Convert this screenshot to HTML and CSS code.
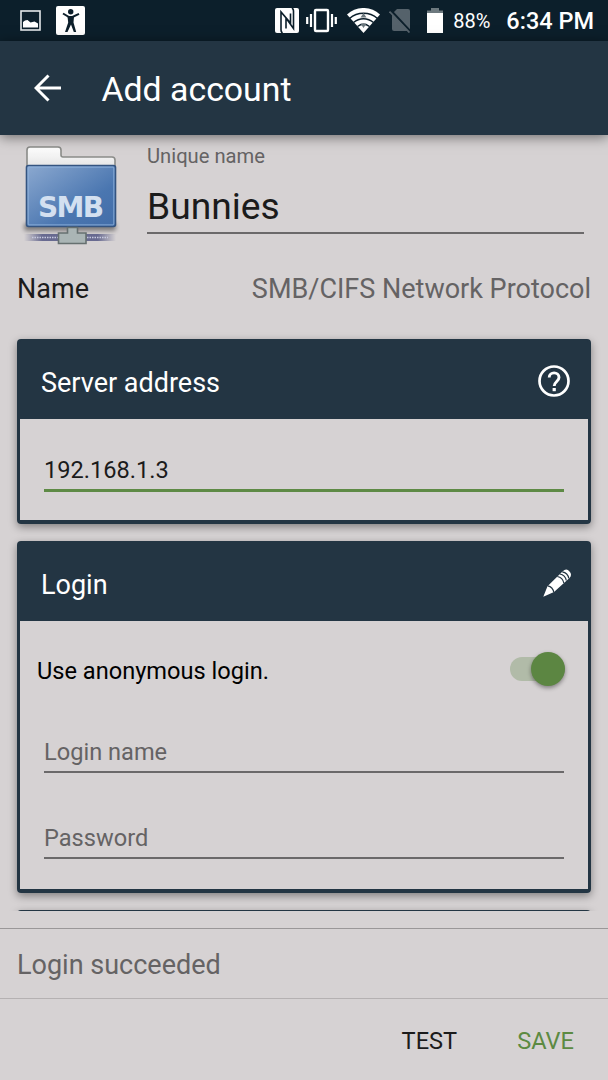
FILE: index.html
```
<!DOCTYPE html>
<html lang="en">
<head>
  <meta charset="UTF-8" />
  <meta name="viewport" content="width=device-width, initial-scale=1" />
  <title>Add account</title>
  <link rel="stylesheet" href="styles.css">
</head>
<body>
  <!-- Status bar -->
  <div class="statusbar">
    <svg class="ic-picture" width="22" height="22" viewBox="0 0 22 22">
      <rect x="1" y="1" width="19" height="19" fill="none" stroke="#e4e8ea" stroke-width="1.6"/>
      <path d="M3 17.5V12l2-1.5 2.5-.5 3 2.5 4-1 3.500 2v4z" fill="#fff"/>
    </svg>
    <svg class="ic-person" width="29" height="29" viewBox="0 0 29 29">
      <rect width="29" height="29" rx="2" fill="#fff"/>
      <circle cx="14.7" cy="5.7" r="2.7" fill="#0c1f2b"/>
      <path d="M7 7.5l6 3.500h3.500l6.500-3.200M14.700 11v6" fill="none" stroke="#0c1f2b" stroke-width="2"/>
      <path d="M11.500 10.500h6.500l-.5 6 2.700 9.500h-2.400L15 18.500 11.500 26H9l3.200-9.500z" fill="#0c1f2b"/>
    </svg>

    <div class="status-right">
      <svg class="ic-nfc" width="24" height="25" viewBox="0 0 24 25">
        <rect width="24" height="25" rx="2" fill="#fff"/>
        <path d="M7.500 25q-1.500-1-1.500-3V4l9.500 11V5.500M11 20.500V10l7.500 10.500V3q0-2-1.500-3" fill="none" stroke="#0c1f2b" stroke-width="1.6"/>
      </svg>
      <svg class="ic-vibrate" width="31" height="25" viewBox="0 0 31 25">
        <rect x="9" y="2" width="13" height="21" rx="1" fill="none" stroke="#fff" stroke-width="2.4"/>
        <path d="M5 6v13M1.200 9v7M26 6v13M29.800 9v7" stroke="#fff" stroke-width="2.2"/>
      </svg>
      <svg class="ic-wifi" width="33" height="25" viewBox="0 0 33 25">
        <path d="M0 6.500C9.500-2.200 23.500-2.200 33 6.500L16.500 25z" fill="#fff"/>
        <path d="M2.500 10.500c8-7 20-7 28 0M6.500 14.500c6-5 14-5 20 0M10.500 18.500c4-3 8-3 12 0" fill="none" stroke="#0c1f2b" stroke-width="1.5"/>
        <path d="M16.500 5l3 4.500h-6zM16.500 20l-3-4.500h6z" fill="#6d797f"/>
      </svg>
      <svg class="ic-nosim" width="23" height="25" viewBox="0 0 23 25">
        <path d="M8 1h11q2 0 2 2v19q0 1-2 1H5q-2 0-2-2V6z" fill="#55626b"/>
        <path d="M1 1.500l20.500 22" stroke="#0c1f2b" stroke-width="2.4"/>
        <path d="M.5 3.500l20 21" stroke="#55626b" stroke-width="1.8"/>
      </svg>
      <svg class="ic-battery" width="16" height="25" viewBox="0 0 16 25">
        <path d="M0 2.500h4V0h8v2.500h4V6H0z" fill="#6d797f"/>
        <rect y="5" width="16" height="20" fill="#fff"/>
      </svg>
      <span class="percent">88%</span>
      <span class="clock">6:34 PM</span>
    </div>
  </div>

  <!-- Toolbar -->
  <header class="toolbar">
    <svg width="28" height="28" viewBox="0 0 28 28">
      <path d="M27 14H2M14.500 1.500L2 14l12.500 12.500" fill="none" stroke="#fff" stroke-width="3"/>
    </svg>
    <h1>Add account</h1>
  </header>

  <main class="content">
    <div class="identity">
      <svg class="smb" width="100" height="104" viewBox="0 0 100 104">
        <defs>
          <linearGradient id="blue" x1="0" y1="0" x2="1" y2="1">
            <stop offset="0" stop-color="#8ca9d0"/>
            <stop offset=".65" stop-color="#4a76b0"/>
            <stop offset="1" stop-color="#426da8"/>
          </linearGradient>
          <linearGradient id="paper" x1="0" y1="0" x2="0" y2="1">
            <stop offset="0" stop-color="#fff"/>
            <stop offset="1" stop-color="#dcdcdc"/>
          </linearGradient>
          <linearGradient id="cable" x1="0" y1="0" x2="1" y2="0">
            <stop offset="0" stop-color="#686a90" stop-opacity="0"/>
            <stop offset=".2" stop-color="#686a90"/>
            <stop offset=".8" stop-color="#686a90"/>
            <stop offset="1" stop-color="#686a90" stop-opacity="0"/>
          </linearGradient>
          <filter id="soft" x="-10%" y="-50%" width="120%" height="200%"><feGaussianBlur stdDeviation="2"/></filter>
        </defs>
        <rect x="4" y="81" width="92" height="8" rx="3" fill="#000" opacity=".4" filter="url(#soft)"/>
        <path d="M7 24V8q0-3 3-3h28q3 0 3 3v5q0 2 2 2h49q3 0 3 3v13H7z" fill="url(#paper)" stroke="#8b8c89" stroke-width="1.6"/>
        <rect x="6.500" y="23.500" width="89" height="61" rx="2" fill="url(#blue)" stroke="#345480" stroke-width="1.6"/>
        <rect x="8.200" y="25.200" width="85.600" height="57.600" rx="1" fill="none" stroke="#8fb2dc" stroke-width="1.3" opacity=".7"/>
        <text x="51" y="74.500" text-anchor="middle" textLength="66">SMB</text>
        <rect x="4" y="92" width="92" height="7" fill="url(#cable)"/>
        <path d="M12 95.500h76" stroke="#c8cbe0" stroke-width="1.6" stroke-dasharray="1.5 1"/>
        <path d="M47.500 85.500h10v5.500h8.500v10.500H38.500V91h9z" fill="#aab5b5" stroke="#667070" stroke-width="1.6"/>
      </svg>
      <div class="unique">
        <label for="unique">Unique name</label>
        <input id="unique" type="text" value="Bunnies">
      </div>
    </div>

    <div class="type">
      <span>Name</span>
      <span class="muted">SMB/CIFS Network Protocol</span>
    </div>

    <section class="card card-server">
      <div class="card-head">
        <h2>Server address</h2>
        <svg class="ic-help" width="32" height="32" viewBox="0 0 32 32">
          <circle cx="16" cy="16" r="14.5" fill="none" stroke="#fff" stroke-width="2.7"/>
          <path d="M11.200 12.500c0-6.200 9.800-6.200 9.800 0 0 3.800-4.800 4.200-4.800 8.500" fill="none" stroke="#fff" stroke-width="2.9"/>
          <rect x="14.600" y="23" width="3.200" height="3.200" fill="#fff"/>
        </svg>
      </div>
      <div class="card-body">
        <input class="field active" type="text" value="192.168.1.3">
      </div>
    </section>

    <section class="card card-login">
      <div class="card-head">
        <h2>Login</h2>
        <svg class="ic-pencil" width="28" height="28" viewBox="0 0 28 28">
          <path d="M.3 27.700L4.500 17.200 19.500 2.500q4-4 7 0 3 3 0 6.500L11 23z" fill="#fff"/>
          <path d="M4.800 16.800q5 1 6 6.500M14.300 7.500q5.500 1 6.500 6.500M16.800 5q5.500 1 6.500 6.500M19.300 2.800q5.500 1 6.500 6.500" fill="none" stroke="#233543" stroke-width="1.2"/>
        </svg>
      </div>
      <div class="card-body">
        <div class="anon">
          <span>Use anonymous login.</span>
          <div class="switch"><div class="thumb"></div></div>
        </div>
        <input class="field" type="text" placeholder="Login name">
        <input class="field" type="text" placeholder="Password">
      </div>
    </section>

    <section class="card card-next"></section>
  </main>

  <div class="result">Login succeeded</div>

  <footer class="actions">
    <button>TEST</button>
    <button class="primary">SAVE</button>
  </footer>
</body>
</html>
```
FILE: styles.css
```
* {
  box-sizing: border-box;
}

body {
  margin: 0;
  height: 1080px;
  display: flex;
  flex-direction: column;
  overflow: hidden;
  background: #d6d2d3;
  color: #1b1b1b;
  font-family: Roboto, sans-serif;
  font-size: 27px;
}

svg {
  display: block;
  flex: none;
}

h1, h2 {
  margin: 0;
  font-weight: 400;
}

input, button {
  border: 0;
  padding: 0;
  background: none;
  color: inherit;
  font-family: inherit;
  outline: none;
}

/* Status bar */
.statusbar {
  flex: none;
  display: flex;
  align-items: center;
  height: 41px;
  padding: 0 14px 0 20px;
  background: #0c1f2b;
  color: #fff;
}

.ic-person {
  margin-left: 14px;
}

.status-right {
  display: flex;
  align-items: center;
  margin-left: auto;
}

.ic-vibrate { margin-left: 7px; }
.ic-wifi { margin-left: 10px; }
.ic-nosim { margin-left: 9px; }
.ic-battery { margin-left: 15px; }

.percent {
  margin-left: 10px;
  font-size: 20px;
  line-height: 40px;
}

.clock {
  margin-left: 16px;
  padding-top: 1px;
  font-size: 23.5px;
  font-weight: 500;
  line-height: 42px;
}

/* Toolbar */
.toolbar {
  position: relative;
  z-index: 1;
  flex: none;
  display: flex;
  align-items: center;
  height: 94px;
  padding-left: 34px;
  background: #233543;
  color: #fff;
  box-shadow: 0 2px 12px rgba(0, 0, 0, 0.5);
}

.toolbar h1 {
  margin-left: 39.5px;
  padding-top: 3px;
  font-size: 33.8px;
  line-height: 40px;
}

/* Scrolling form */
.content {
  flex: none;
  height: 776px;
  padding: 0 17px;
  overflow: hidden;
}

.identity {
  display: flex;
  height: 119px;
  padding: 7px 7px 0 3px;
}

.smb text {
  font-family: "DejaVu Sans", sans-serif;
  font-size: 28px;
  font-weight: 700;
  fill: #d3e0f0;
}

.unique {
  flex: 1;
  margin-left: 27px;
}

.unique label {
  display: block;
  padding-top: 2px;
  color: #656364;
  font-size: 20.2px;
  line-height: 24px;
}

.unique input {
  display: block;
  width: 100%;
  height: 66px;
  padding-top: 12px;
  border-bottom: 2px solid #6b696a;
  font-size: 37.2px;
}

.type {
  display: flex;
  justify-content: space-between;
  height: 85px;
  padding-top: 14px;
  line-height: 42px;
}

.muted {
  color: #656364;
}

/* Cards */
.card {
  margin-bottom: 17px;
  border: solid #233543;
  border-width: 0 3px 4px;
  border-radius: 4px;
  background: linear-gradient(#233543 80px, #d6d2d3 80px) border-box;
  box-shadow: 0 3px 8px rgba(0, 0, 0, 0.4);
}

.card-server { height: 185px; }
.card-login { height: 352px; }

.card-head {
  display: flex;
  align-items: center;
  justify-content: space-between;
  height: 80px;
  padding: 5px 18px 0 21px;
  color: #fff;
}

.card-head h2 {
  padding-top: 2px;
  font-size: 27px;
  line-height: 32px;
}

.ic-help {
  margin-top: -1px;
}

.ic-pencil {
  margin: -2px -1px 0 0;
}

.card-body {
  padding: 0 24px;
}

.field {
  display: block;
  width: 100%;
  height: 44px;
  margin-bottom: 42px;
  padding-top: 4px;
  border-bottom: 2px solid #6b696a;
  font-size: 23.6px;
}

.field::placeholder {
  color: #656364;
  opacity: 1;
}

.field.active {
  height: 45px;
  margin-top: 28px;
  border-bottom: 3px solid #5e8a45;
}

.anon {
  display: flex;
  align-items: center;
  justify-content: space-between;
  height: 96px;
  margin: 0 -1px 12px -7px;
  color: #000;
  font-size: 23.6px;
}

.anon span {
  padding-top: 3px;
}

.switch {
  width: 55px;
  height: 24px;
  border-radius: 12px;
  background: #b1bba8;
}

.thumb {
  width: 34px;
  height: 34px;
  margin: -5px 0 0 21px;
  border-radius: 50%;
  background: #5c8642;
  box-shadow: 0 2px 4px rgba(0, 0, 0, 0.4);
}

.card-next {
  height: 100px;
}

/* Bottom area */
.result {
  flex: none;
  height: 71px;
  margin-top: 17px;
  padding: 2px 17px 0;
  border: solid #9a9798;
  border-width: 1px 0;
  border-bottom-color: #b5b1b2;
  color: #656364;
  line-height: 69px;
}

.actions {
  display: flex;
  justify-content: flex-end;
  gap: 60px;
  padding: 2px 34px 0 0;
}

.actions button {
  height: 80px;
  font-size: 23.6px;
}

.actions .primary {
  color: #5c8a42;
}
```
